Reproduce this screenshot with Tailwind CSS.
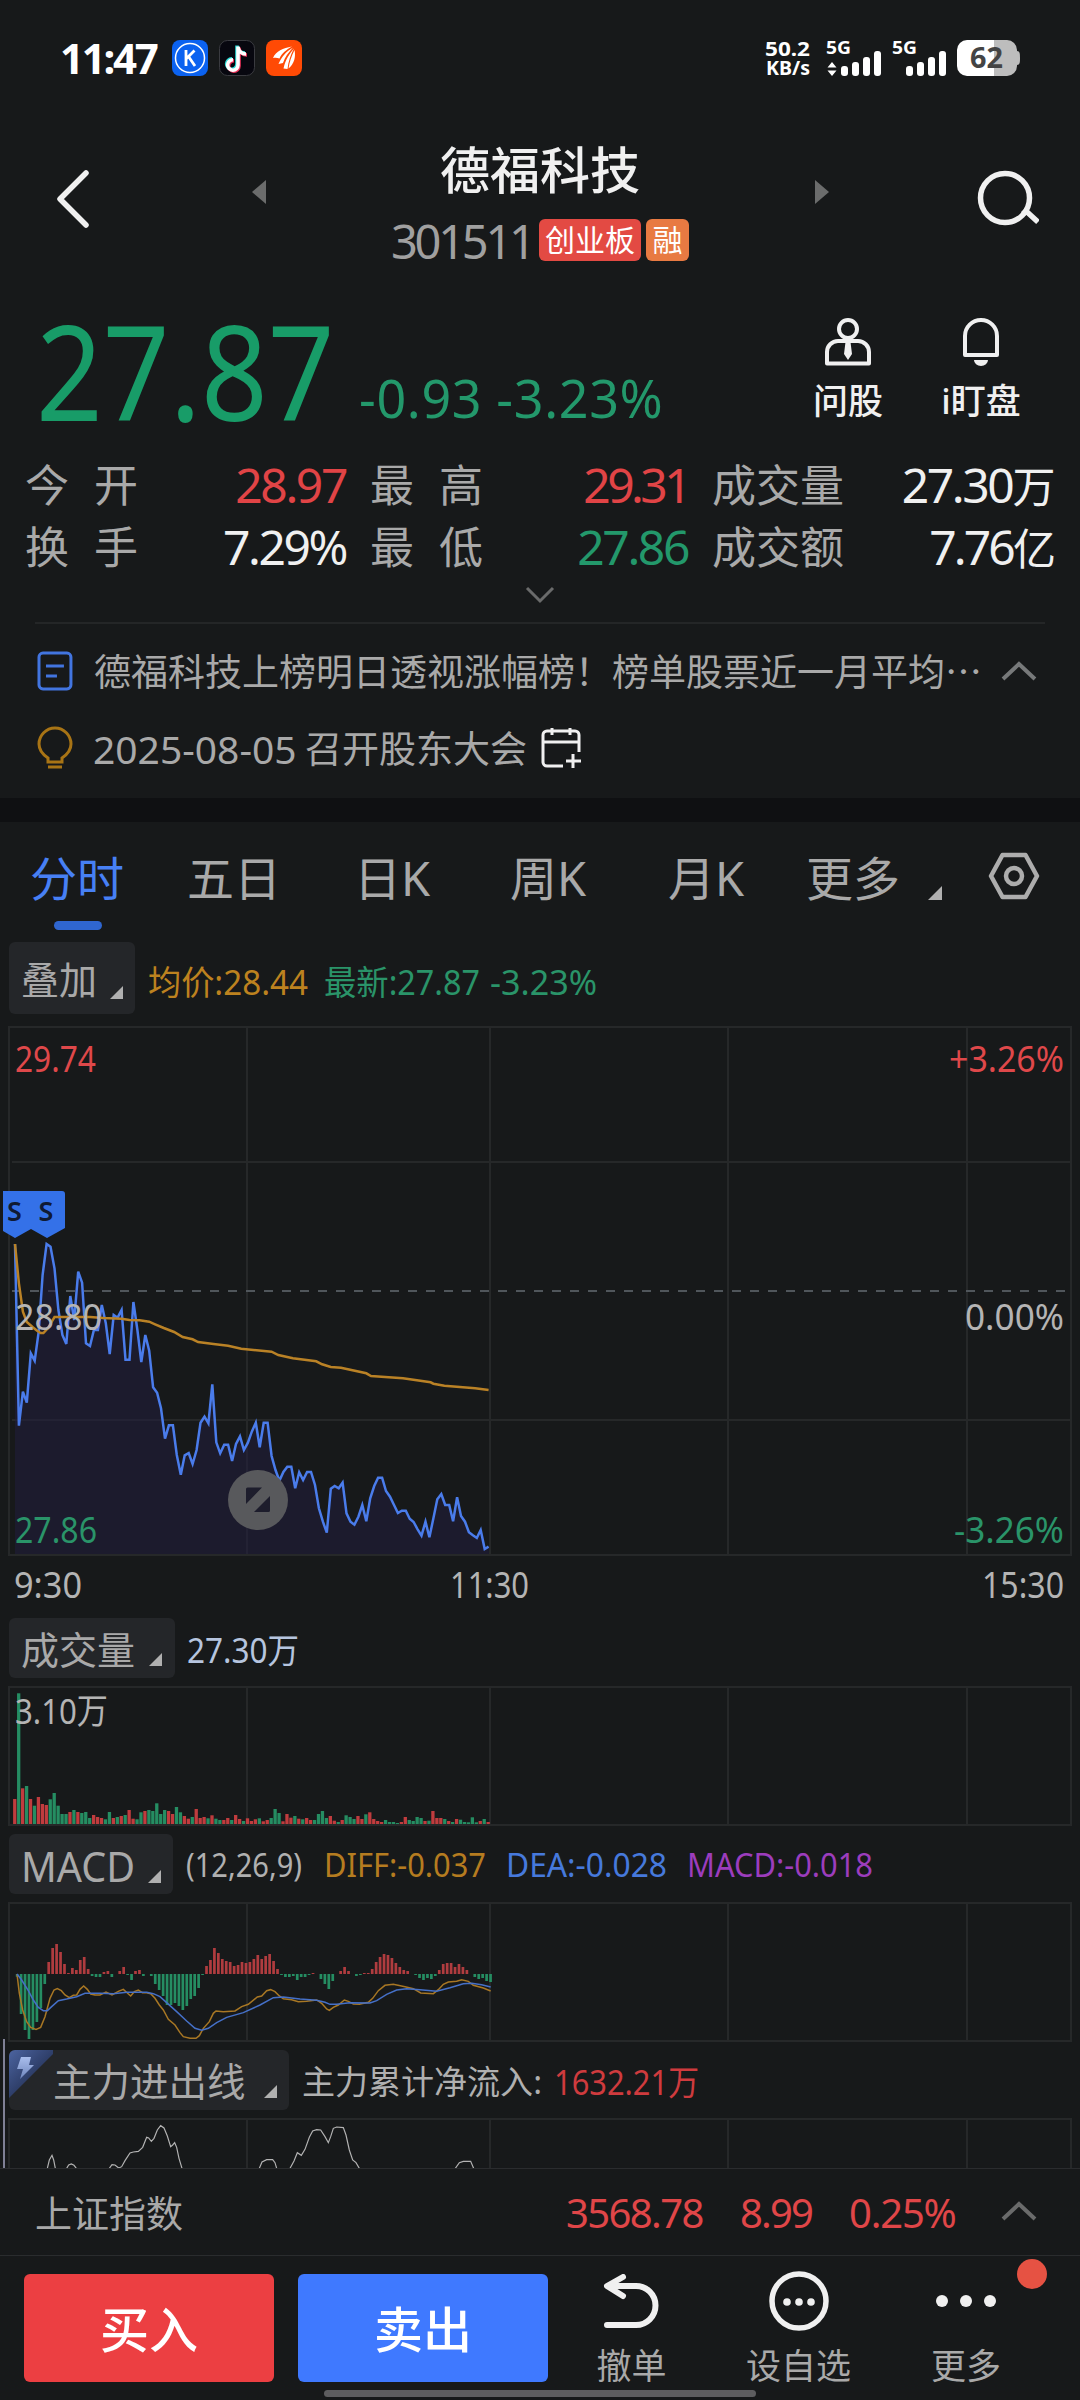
<!DOCTYPE html>
<html lang="zh-CN">
<head>
    <meta charset="UTF-8">
    <meta name="viewport" content="width=device-width, initial-scale=1.0">
    <title>德福科技 301511</title>
    <script src="https://cdn.jsdelivr.net/npm/@tailwindcss/browser@4"></script>
</head>
<body class="bg-[#17191a] font-['Noto_Sans','Noto_Sans_CJK_SC',sans-serif] text-[#a9a9a9]">
<div class="w-[1080px] h-[2400px] overflow-hidden flex flex-col leading-none whitespace-nowrap">

  <!-- Status bar -->
  <div class="h-[116px] shrink-0 flex items-center pl-[60px] pr-[61px] text-white">
    <span class="w-[112px] text-[42px] font-bold tracking-[-0.055em]">11:47</span>
    <div class="flex gap-[11px]">
      <svg class="w-9 h-9" viewBox="0 0 36 36">
        <rect width="36" height="36" rx="8" fill="#0b62f0"/>
        <circle cx="18" cy="18" r="14.500" fill="none" stroke="#fff" stroke-width="1.5"/>
        <path d="M14 10v16M22.500 10.500l-8 8M16.500 16.500l6.500 9.500" fill="none" stroke="#fff" stroke-width="2.800"/>
      </svg>
      <svg class="w-9 h-9" viewBox="0 0 36 36">
        <rect x=".5" y=".5" width="35" height="35" rx="8" fill="#07070f" stroke="#3a3b40"/>
        <g fill="none" stroke-width="3.6">
          <path d="M18 5.500v18.500a5.200 5.200 0 1 1-5-5.200M18 6c.5 4.500 4 7 8 7" stroke="#2bd9d5"/>
          <path d="M20 7.500v18.500a5.200 5.200 0 1 1-5-5.200M20 8c.5 4.500 4 7 8 7" stroke="#f0325a"/>
          <path d="M19 6.500v18.500a5.200 5.200 0 1 1-5-5.200M19 7c.5 4.500 4 7 8 7" stroke="#fff"/>
        </g>
      </svg>
      <svg class="w-9 h-9" viewBox="0 0 36 36">
        <rect width="36" height="36" rx="8" fill="#ff4a05"/>
        <path d="M26 6.500C17 8 10 11 7 18c2-.5 4-.5 6.500.5C16 13 20 10 26 6.500z" fill="#fff"/>
        <path d="M27 7.500C20 12 16 16 12.500 24l4.500-1C19 17 22 13 27 7.500z" fill="#fff"/>
        <path d="M28 8.500c-4.500 5-8.500 11-10.500 20l4 .5c1-8 3-14 6.500-20.500z" fill="#fff"/>
        <path d="M28.500 10c-3 6-5 11.500-6 18.500C28 24 30 17 28.500 10z" fill="#fff"/>
      </svg>
    </div>
    <div class="ml-auto flex items-center">
      <svg class="w-[60px] h-10" viewBox="765 38 60 40" fill="#fff" font-weight="700" font-size="20">
        <text x="766" y="56" textLength="45" lengthAdjust="spacingAndGlyphs">50.2</text>
        <text x="767" y="75" font-size="19" textLength="44" lengthAdjust="spacingAndGlyphs">KB/s</text>
      </svg>
      <svg class="w-[132px] h-10" viewBox="-1 0 132 40" fill="#fff" overflow="visible">
        <text x="1" y="16" font-size="18" font-weight="700" textLength="25" lengthAdjust="spacingAndGlyphs">5G</text>
        <path d="M7 24l4.500 5.500h-9zM7 38l4.500-5.500h-9z"/>
        <rect x="16" y="28" width="7" height="10" rx="3"/><rect x="27" y="24" width="7" height="14" rx="3"/><rect x="38" y="19" width="7" height="19" rx="3"/><rect x="49" y="13" width="7" height="25" rx="3"/>
        <text x="67" y="16" font-size="18" font-weight="700" textLength="25" lengthAdjust="spacingAndGlyphs">5G</text>
        <rect x="81" y="28" width="7" height="10" rx="3"/><rect x="92" y="24" width="7" height="14" rx="3"/><rect x="103" y="19" width="7" height="19" rx="3"/><rect x="114" y="13" width="7" height="25" rx="3"/>
      </svg>
      <svg class="w-[63px] h-9" viewBox="-1 0 63 36" overflow="visible">
        <path d="M10 0h27v36H10A10 10 0 0 1 0 26V10A10 10 0 0 1 10 0z" fill="#fff"/>
        <path d="M37 0h13a10 10 0 0 1 10 10v1c3 0 3 3 3 7s0 7-3 7v1a10 10 0 0 1-10 10H37z" fill="#bdbdbd"/>
        <text x="13" y="28" font-size="28" font-weight="700" fill="#444" textLength="33" lengthAdjust="spacingAndGlyphs">62</text>
      </svg>
    </div>
  </div>

  <!-- Stock title -->
  <header class="h-[174px] shrink-0 flex items-start pl-[55px] text-[#f0f0f0]">
    <svg class="w-9 h-[62px] mt-[52px]" viewBox="0 0 36 62" fill="none" stroke="currentColor" stroke-width="5.500" stroke-linecap="round" stroke-linejoin="round"><path d="M31 5L5 31l26 26"/></svg>
    <svg class="w-[14px] h-6 mt-[64px] ml-[161px]" viewBox="0 0 14 24"><path d="M14 0v24L0 12z" fill="#6b6c6c"/></svg>
    <div class="w-[300px] mt-[27px] ml-[124px] flex flex-col items-center">
      <h1 class="text-[50px] leading-[54px] font-medium">德福科技</h1>
      <div class="flex items-center mt-[21px] h-[44px]">
        <span class="w-[148px] text-[47px] leading-[46px] tracking-[-0.07em] pt-[2px] text-[#a0a0a0]">301511</span>
        <span class="w-[102px] h-[42px] rounded-md bg-[#e34a43] text-white text-[30px] leading-[41px] text-center">创业板</span>
        <span class="w-[43px] h-[42px] ml-[5px] rounded-md bg-[#e87a42] text-white text-[30px] leading-[41px] text-center">融</span>
      </div>
    </div>
    <svg class="w-[14px] h-6 mt-[64px] ml-[125px]" viewBox="0 0 14 24"><path d="M0 0v24l14-12z" fill="#6b6c6c"/></svg>
    <svg class="w-[62px] h-[58px] mt-[54px] ml-[148px]" viewBox="0 0 62 58" fill="none" stroke="currentColor" stroke-width="5.500"><circle cx="28" cy="28" r="24.500"/><path d="M46 44l3-3 12 11"/></svg>
  </header>

  <!-- Price -->
  <section class="h-[160px] shrink-0 flex items-start text-[#189c68]">
    <div class="w-[324px] shrink-0 pl-[36px]">
      <div class="origin-left scale-x-[0.885] text-[132px] leading-[160px]">27.87</div>
    </div>
    <div class="w-[475px] shrink-0 pl-[35px] pt-[80px] text-[52px] leading-[56px] tracking-[0.013em] text-[#23986b]"><span>-0.93</span><span class="ml-[14px]">-3.23%</span></div>
    <div class="w-[98px] flex flex-col items-center text-[#f0f0f0] pt-[27px]">
      <svg class="w-12 h-[50px]" viewBox="0 0 48 50" fill="none" stroke="currentColor" stroke-width="4"><circle cx="24" cy="12" r="9"/><path d="M3 46.500V35a11 11 0 0 1 11-11h20a11 11 0 0 1 11 11v11.500z" stroke-linejoin="round"/><path d="M21.500 25h5l1.500 12-4 6-4-6z" fill="currentColor" stroke="none"/></svg>
      <span class="mt-[15px] text-[35px] leading-[38px] font-medium">问股</span>
    </div>
    <div class="w-[168px] flex flex-col items-center text-[#f0f0f0] pt-[27px]">
      <svg class="w-12 h-[50px]" viewBox="0 0 48 50" fill="none" stroke="currentColor" stroke-width="4"><path d="M8 38V19a16 16 0 0 1 32 0v19z" stroke-linejoin="round"/><path d="M17 43h14a7 6 0 0 1-14 0z" fill="currentColor" stroke="none"/></svg>
      <span class="mt-[15px] text-[35px] leading-[38px] font-medium">i盯盘</span>
    </div>
  </section>

  <!-- Quote figures -->
  <section class="h-[127px] shrink-0 pl-[25px] pt-[4px] grid grid-cols-[321px_318px_341px] grid-rows-[62px_61px] gap-x-[24px] items-center text-[44px]">
    <div class="flex justify-between items-center"><span>今<i class="inline-block w-[25px]"></i>开</span><span class="text-[48px] tracking-[-0.05em] text-[#e14446]">28.97</span></div>
    <div class="flex justify-between items-center"><span>最<i class="inline-block w-[25px]"></i>高</span><span class="text-[48px] tracking-[-0.075em] text-[#e14446]">29.31</span></div>
    <div class="flex justify-between items-center"><span>成交量</span><span class="text-[48px] tracking-[-0.05em] text-[#f0f0f0]">27.30<span class="text-[43px]">万</span></span></div>
    <div class="flex justify-between items-center"><span>换<i class="inline-block w-[25px]"></i>手</span><span class="text-[48px] tracking-[-0.05em] text-[#f0f0f0]">7.29%</span></div>
    <div class="flex justify-between items-center"><span>最<i class="inline-block w-[25px]"></i>低</span><span class="text-[48px] tracking-[-0.05em] text-[#23986b]">27.86</span></div>
    <div class="flex justify-between items-center"><span>成交额</span><span class="text-[48px] tracking-[-0.06em] text-[#f0f0f0]">7.76<span class="text-[43px]">亿</span></span></div>
  </section>
  <div class="h-[47px] shrink-0 mx-[35px] border-b-2 border-[#242627] flex justify-center pt-[9px]">
    <svg class="w-[30px] h-[18px]" viewBox="0 0 30 18" fill="none" stroke="#6a6b6b" stroke-width="3"><path d="M2 2l13 13L28 2"/></svg>
  </div>

  <!-- Notices -->
  <section class="h-[174px] shrink-0 pl-[37px] pr-[43px] pt-[18px]">
    <div class="h-[58px] flex items-center">
      <svg class="w-9 h-10" viewBox="0 0 36 40" fill="none" stroke="#4275e0" stroke-width="3"><rect x="2" y="2" width="32" height="36" rx="4"/><path d="M9 15h18M9 25h11"/></svg>
      <span class="ml-[21px] w-[909px] text-[37px]">德福科技上榜明日透视涨幅榜！榜单股票近一月平均<span class="font-['Noto_Sans_CJK_SC']">…</span></span>
      <svg class="w-9 h-5" viewBox="0 0 36 20" fill="none" stroke="#77797a" stroke-width="4"><path d="M2 18L18 3l16 15"/></svg>
    </div>
    <div class="h-[58px] mt-[19px] flex items-center">
      <svg class="w-9 h-11" viewBox="0 0 36 44" fill="none" stroke="#a87415" stroke-width="3"><path d="M11 36v-4C5 28 2 24 2 18a16 16 0 0 1 32 0c0 6-3 10-9 14v4z"/><path d="M11 41h14"/></svg>
      <span class="ml-[20px] w-[212px] text-[39px]">2025-08-05</span>
      <span class="text-[37px] w-[235px]">召开股东大会</span>
      <svg class="w-[42px] h-[42px]" viewBox="0 0 42 42" fill="none" stroke="#f0f0f0" stroke-width="3"><path d="M23 39H7a4 4 0 0 1-4-4V8a4 4 0 0 1 4-4h28a4 4 0 0 1 4 4v17M3 15h36M12 1v7M30 1v7M33 27v14M26 34h15"/></svg>
    </div>
  </section>
  <div class="h-6 shrink-0 bg-[#0f1012]"></div>

  <!-- Period tabs -->
  <nav class="h-[120px] shrink-0 pt-[32px] pl-[30px] flex items-start text-[47px] leading-[48px]">
    <div class="w-[157px] text-[#4780f5]">分时<div class="w-12 h-[9px] mt-[19px] ml-[24px] rounded-full bg-[#2f66d0]"></div></div>
    <span class="w-[167px]">五日</span>
    <span class="w-[156px]">日K</span>
    <span class="w-[158px]">周K</span>
    <span class="w-[138px]">月K</span>
    <span class="w-[122px]">更多</span>
    <svg class="w-[14px] h-[14px] mt-[32px]" viewBox="0 0 14 14"><path d="M14 0v14H0z" fill="#b0b0b0"/></svg>
    <svg class="w-[52px] h-12 ml-[46px] -mt-[2px]" viewBox="0 0 52 48" fill="none" stroke="#adadad" stroke-width="4.500"><path d="M14.500 3h23L49 24 37.500 45h-23L3 24z" stroke-linejoin="round"/><circle cx="26" cy="24" r="8"/></svg>
  </nav>

  <!-- Intraday price -->
  <div class="h-[84px] shrink-0 pl-[9px] flex items-start text-[34px]">
    <div class="w-[126px] h-[72px] shrink-0 rounded-md bg-[#242629] flex items-center pl-[12px] pt-[1px] text-[38px]">叠加
      <svg class="w-[13px] h-[13px] ml-[13px] mt-[28px]" viewBox="0 0 14 14"><path d="M14 0v14H0z" fill="#b0b0b0"/></svg>
    </div>
    <svg class="w-[480px] h-[84px]" viewBox="135 942 480 84" font-size="34" fill="#2a9469">
      <text x="148" y="995" fill="#bd821f" textLength="160" lengthAdjust="spacingAndGlyphs">均价:28.44</text>
      <text x="324" y="995" textLength="156" lengthAdjust="spacingAndGlyphs">最新:27.87</text>
      <text x="490" y="995" textLength="107" lengthAdjust="spacingAndGlyphs">-3.23%</text>
    </svg>
  </div>
  <svg class="w-[1080px] h-[592px] shrink-0" viewBox="0 1026 1080 592" font-size="36">
    <g stroke="#262829" stroke-width="2" fill="none">
      <path d="M9 1027H1071V1555H9zM247 1027V1555M490 1027V1555M728 1027V1555M967 1027V1555M12 1162H1071M12 1420H1071"/>
      <path d="M12 1291H1071" stroke="#50565b" stroke-dasharray="9 9"/>
    </g>
    <polygon id="price-area" fill="#211e3e" fill-opacity=".55"/>
    <polyline id="price-line" fill="none" stroke="#4a7ceb" stroke-width="2.500"/>
    <polyline id="avg-line" fill="none" stroke="#ba8226" stroke-width="2.500"/>
    <path d="M3 1191H62a3 3 0 0 1 3 3V1228L47 1238 31 1229 15 1238 3 1231z" fill="#3471e8"/>
    <g font-size="27" font-weight="600" fill="#0f1a33"><text x="7" y="1221">S</text><text x="38.500" y="1221">S</text></g>
    <circle cx="258" cy="1500" r="30" fill="#58595c"/>
    <path d="M246 1489a1.500 1.500 0 0 1 1.500-1.500H262L246 1504zM270 1496V1510.500a1.500 1.500 0 0 1-1.500 1.500H254z" fill="#1d1d2c"/>
    <g fill="#b4b4b4">
      <text x="15" y="1072" fill="#df484a" textLength="81" lengthAdjust="spacingAndGlyphs">29.74</text>
      <text x="949" y="1072" fill="#df484a" textLength="115" lengthAdjust="spacingAndGlyphs">+3.26%</text>
      <text x="15" y="1330" textLength="87" lengthAdjust="spacingAndGlyphs">28.80</text>
      <text x="965" y="1330" textLength="99" lengthAdjust="spacingAndGlyphs">0.00%</text>
      <text x="15" y="1543" fill="#2a9469" textLength="82" lengthAdjust="spacingAndGlyphs">27.86</text>
      <text x="954" y="1543" fill="#2a9469" textLength="110" lengthAdjust="spacingAndGlyphs">-3.26%</text>
      <text x="14" y="1598" textLength="68" lengthAdjust="spacingAndGlyphs">9:30</text>
      <text x="450" y="1598" textLength="79" lengthAdjust="spacingAndGlyphs">11:30</text>
      <text x="982" y="1598" textLength="82" lengthAdjust="spacingAndGlyphs">15:30</text>
    </g>
  </svg>

  <!-- Volume -->
  <div class="h-[68px] shrink-0 pl-[9px] flex items-start">
    <div class="w-[166px] h-[60px] shrink-0 rounded-md bg-[#242629] flex items-center pl-[12px] pt-[2px] text-[38px]">成交量
      <svg class="w-[13px] h-[13px] ml-[14px] mt-[21px]" viewBox="0 0 14 14"><path d="M14 0v14H0z" fill="#b0b0b0"/></svg>
    </div>
    <svg class="w-[140px] h-[60px]" viewBox="175 1618 140 60" font-size="34"><text x="187" y="1663" fill="#b6c5df" textLength="112" lengthAdjust="spacingAndGlyphs">27.30万</text></svg>
  </div>
  <svg class="w-[1080px] h-[148px] shrink-0" viewBox="0 1686 1080 148">
    <path d="M9 1687H1071V1825H9zM247 1687V1825M490 1687V1825M728 1687V1825M967 1687V1825" stroke="#262829" stroke-width="2" fill="none"/>
    <g id="volume-bars"></g>
    <text x="15" y="1724" font-size="35" fill="#b4b4b4" textLength="93" lengthAdjust="spacingAndGlyphs">3.10万</text>
  </svg>

  <!-- MACD -->
  <div class="h-[68px] shrink-0 pl-[9px] flex items-start">
    <div class="w-[164px] h-[60px] shrink-0 rounded-md bg-[#242629] flex items-center pl-[12px]">
      <svg class="w-[140px] h-[60px]" viewBox="21 1834 140 60"><text x="21" y="1882" font-size="41" fill="#a9a9a9" textLength="114" lengthAdjust="spacingAndGlyphs">MACD</text><path d="M161 1870v13h-13z" fill="#b0b0b0"/></svg>
    </div>
    <svg class="w-[720px] h-[60px]" viewBox="173 1834 720 60" font-size="32">
      <text x="186" y="1877" fill="#b0b0b0" textLength="116" lengthAdjust="spacingAndGlyphs">(12,26,9)</text>
      <text x="324" y="1877" fill="#b57c20" textLength="162" lengthAdjust="spacingAndGlyphs">DIFF:-0.037</text>
      <text x="506" y="1877" fill="#4679dc" textLength="161" lengthAdjust="spacingAndGlyphs">DEA:-0.028</text>
      <text x="687" y="1877" fill="#9c3dbd" textLength="186" lengthAdjust="spacingAndGlyphs">MACD:-0.018</text>
    </svg>
  </div>
  <svg class="w-[1080px] h-[137px] shrink-0" viewBox="0 1902 1080 137" overflow="visible">
    <path d="M9 1903H1071V2041H9zM247 1903V2041M490 1903V2041M728 1903V2041M967 1903V2041" stroke="#262829" stroke-width="2" fill="none"/>
    <g id="macd-bars"></g>
    <g transform="translate(0 1890) scale(.33333)" fill="none" stroke-width="4.500">
      <polyline stroke="#a87724" points="51,252 58,310 68,360 80,395 92,412 108,418 122,412 135,380 150,325 162,300 172,296 184,302 195,315 208,323 220,316 230,315 240,298 251,288 262,298 272,312 285,315 300,315 318,306 336,315 355,304 370,298 382,309 392,318 403,305 415,300 427,308 440,308 452,311 465,325 478,345 490,360 505,388 525,405 540,428 550,440 570,445 588,445 598,437 610,415 628,395 640,370 648,363 670,365 705,363 725,350 745,343 772,321 785,318 800,302 812,299 825,305 838,318 850,326 875,329 895,335 920,334 950,330 965,340 980,357 988,361 1000,352 1015,345 1033,330 1045,334 1060,342 1078,343 1105,337 1118,325 1135,302 1155,286 1180,283 1215,290 1240,296 1262,309 1300,311 1315,299 1330,283 1345,276 1370,274 1385,269 1405,274 1420,286 1450,294 1472,303"/>
      <polyline stroke="#4570c8" points="51,252 65,270 85,302 100,330 115,352 130,362 142,362 155,350 175,332 200,327 230,320 255,310 300,310 340,311 380,307 440,307 460,311 480,320 500,338 530,365 560,393 585,415 605,421 625,415 650,398 680,382 730,368 780,345 820,323 850,321 900,327 950,331 975,337 990,343 1010,343 1050,338 1110,339 1130,332 1160,313 1190,300 1220,296 1260,299 1310,304 1350,293 1390,281 1415,280 1445,284 1472,291"/>
    </g>
  </svg>

  <!-- Main capital flow -->
  <div class="h-[129px] shrink-0 ml-[3px] border-l-2 border-[#7f8095]">
    <div class="h-[79px] pt-[11px] pl-[4px] flex items-start">
      <div class="w-[280px] h-[60px] shrink-0 rounded-md bg-[#242629] overflow-hidden flex items-center">
        <svg class="w-[44px] h-[60px]" viewBox="0 0 44 60">
          <defs>
            <linearGradient id="corner" x1="0" y1="0" x2="1" y2="1"><stop offset="0" stop-color="#4c64a0"/><stop offset=".55" stop-color="#2b3a63"/></linearGradient>
            <linearGradient id="bolt" x1="0" y1="0" x2="0" y2="1"><stop offset="0" stop-color="#a9bdec"/><stop offset="1" stop-color="#6f86bd"/></linearGradient>
          </defs>
          <path d="M0 0h48L0 48z" fill="url(#corner)"/><path d="M12 7h10l-2 8h5L11 29l3-10H8z" fill="url(#bolt)"/>
        </svg>
        <span class="w-[211px] pt-[2px] text-[38.500px]">主力进出线</span>
        <svg class="w-[13px] h-[13px] mt-[23px]" viewBox="0 0 14 14"><path d="M14 0v14H0z" fill="#b0b0b0"/></svg>
      </div>
      <svg class="w-[430px] h-[60px]" viewBox="289 2050 430 60" font-size="33">
        <text x="302" y="2094" fill="#b0b0b0" textLength="240" lengthAdjust="spacingAndGlyphs">主力累计净流入:</text>
        <text x="554" y="2095" font-size="34" fill="#cf3b3e" textLength="145" lengthAdjust="spacingAndGlyphs">1632.21万</text>
      </svg>
    </div>
    <svg class="w-[1075px] h-[50px]" viewBox="5 2118 1075 50">
      <path d="M9 2200V2119H1071V2200M247 2119V2200M490 2119V2200M728 2119V2200M967 2119V2200" stroke="#262829" stroke-width="2" fill="none"/>
      <g transform="translate(0 2030) scale(.33333)" fill="none" stroke="#b4b4b4" stroke-width="3.500">
        <polyline points="142,415 148,390 156,376 161,390 166,415"/>
        <polyline points="200,415 206,405 214,402 222,406 229,415"/>
        <polyline points="328,415 336,404 345,405 356,414 365,410 375,392 390,369 400,366 415,364 428,352 440,322 446,324 454,334 462,325 472,300 482,287 492,294 502,318 512,350 518,345 524,338 530,352 537,385 546,415"/>
        <polyline points="778,415 786,396 800,389 818,389 825,398 830,415"/>
        <polyline points="870,415 882,393 892,368 904,376 915,358 928,322 938,303 950,299 962,300 975,320 985,338 992,320 1000,295 1010,291 1030,293 1038,315 1048,360 1058,390 1068,398 1078,415"/>
        <polyline points="1366,415 1378,398 1390,394 1412,394 1421,415"/>
      </g>
    </svg>
  </div>

  <!-- Index strip -->
  <div class="h-[87px] shrink-0 border-t border-[#2a2c2e] pl-[35px] pr-[43px] pt-[2px] flex items-center text-[37px]">
    <span class="w-[531px]">上证指数</span>
    <span class="w-[174px] text-[40px] tracking-[-0.04em] text-[#e04648]">3568.78</span>
    <span class="w-[109px] text-[40px] tracking-[-0.045em] text-[#e04648]">8.99</span>
    <span class="text-[40px] tracking-[-0.03em] text-[#e04648]">0.25%</span>
    <svg class="w-9 h-5 ml-auto -mt-[5px]" viewBox="0 0 36 20" fill="none" stroke="#6a6b6b" stroke-width="4"><path d="M2 18L18 3l16 15"/></svg>
  </div>

  <!-- Trade bar -->
  <footer class="h-[145px] shrink-0 border-t border-[#2a2c2e] relative flex items-start pt-[18px] pl-6 text-[35px] leading-[38px]">
    <button class="w-[250px] h-[108px] rounded-md bg-[#ec3f42] text-white text-[49px] font-medium pt-[2px]">买入</button>
    <button class="w-[250px] h-[108px] ml-6 rounded-md bg-[#3f79ff] text-white text-[49px] font-medium pt-[2px]">卖出</button>
    <div class="w-[167px] flex flex-col items-center">
      <svg class="w-[60px] h-[58px]" viewBox="0 0 60 58" fill="none" stroke="#f0f0f0" stroke-width="6" stroke-linecap="round" stroke-linejoin="round"><path d="M5 51h29a19.500 19.500 0 0 0 0-39H6M21 3L5 12l16 10"/></svg>
      <span class="mt-[15px]">撤单</span>
    </div>
    <div class="w-[167px] flex flex-col items-center">
      <svg class="w-[62px] h-[62px] -mt-[4px]" viewBox="0 0 62 62" fill="#f0f0f0"><circle cx="31" cy="31" r="27" fill="none" stroke="#f0f0f0" stroke-width="5.500"/><circle cx="19" cy="32" r="3.800"/><circle cx="31" cy="32" r="3.800"/><circle cx="43" cy="32" r="3.800"/></svg>
      <span class="mt-[15px]">设自选</span>
    </div>
    <div class="w-[168px] flex flex-col items-center">
      <svg class="w-[62px] h-[58px]" viewBox="0 0 62 58" fill="#f0f0f0"><circle cx="7" cy="27" r="6"/><circle cx="31" cy="27" r="6"/><circle cx="55" cy="27" r="6"/></svg>
      <span class="mt-[15px]">更多</span>
    </div>
    <div class="absolute left-[1017px] top-[3px] w-[30px] h-[30px] rounded-full bg-[#e65243]"></div>
    <div class="absolute left-[324px] top-[134px] w-[432px] h-[7px] rounded-full bg-[#5d5d5f]"></div>
  </footer>
</div>

<script>
  // One value per minute, 9:30 to 11:30, as depth below the top of the range
  const price = [252,797,695,728,580,602,515,345,252,260,325,450,525,552,408,480,335,368,550,558,510,510,435,490,582,465,473,450,599,599,426,510,606,525,572,682,698,745,836,796,796,885,944,886,879,912,870,788,770,790,673,847,880,854,854,903,852,829,870,848,815,788,862,788,788,888,930,962,936,920,920,985,937,960,936,936,975,1045,1085,1118,986,978,985,968,1060,1085,1094,1070,1035,1084,1015,978,953,953,993,1010,1034,1059,1052,1052,1076,1086,1108,1127,1085,1132,1075,1018,1002,1035,1035,1084,1012,1068,1085,1117,1126,1134,1110,1167,1160];
  const pricePoints = price.map((v, i) => (15 + i * 3.947).toFixed(1) + ',' + (1160 + v / 3).toFixed(1));
  document.getElementById('price-line').setAttribute('points', pricePoints.join(' '));
  document.getElementById('price-area').setAttribute('points', '15,1554 ' + pricePoints.join(' ') + ' 489,1554');

  const avg = [[0,252],[1,370],[2,455],[3,486],[4.5,502],[5.6,512],[6.5,519],[7.2,519],[8.3,505],[10,471],[14,471],[19,471],[22.4,474],[27,476],[29,480],[31.6,481],[34,485],[35.5,493],[37.7,504],[40.3,516],[42.5,531],[45,538],[46.4,546],[50.3,552],[54,557],[57.3,566],[65,575],[66.7,585],[70.4,595],[76.3,604],[77.8,613],[80,621],[82.6,623],[89,640],[90.2,648],[98.3,655],[105.3,667],[106,671],[108.8,677],[116.6,685],[120,690]];
  document.getElementById('avg-line').setAttribute('points', avg.map(([m, v]) => (15 + m * 3.947).toFixed(1) + ',' + (1160 + v / 3).toFixed(1)).join(' '));

  // Negative volume = falling minute
  const volume = [75,-392,107,-114,75,-55,81,60,57,-74,-93,-55,-30,-30,36,-42,36,-33,-36,-18,27,21,18,-14,-36,18,-21,24,-27,42,16,-14,-35,39,-42,-39,-62,-30,-42,39,30,-51,-35,24,16,-21,45,18,21,-17,26,-16,-12,12,18,-12,27,15,-9,17,9,14,-17,8,12,-18,-45,-33,8,30,19,-24,16,-14,18,12,-12,-30,-39,-18,24,10,-6,12,-26,-21,-15,24,15,-29,35,15,9,6,-12,-6,-6,-3,6,21,-12,-9,-21,-18,9,-10,39,18,18,-15,9,-6,15,-13,-6,-5,-20,-5,9,-15,6];
  document.getElementById('volume-bars').innerHTML = volume.map((v, i) => {
    const h = Math.abs(v) / 3;
    return `<rect x="${(13.1 + i * 3.945).toFixed(2)}" y="${(1824 - h).toFixed(1)}" width="3.3" height="${h.toFixed(1)}" fill="${v > 0 ? '#c03c3e' : '#258d62'}"/>`;
  }).join('');

  const macd = [-8,-120,-168,-195,-168,-144,-102,-30,36,78,90,66,30,3,18,12,42,51,15,-6,-9,-9,6,9,-9,0,9,21,-3,-18,9,12,-6,0,-6,-30,-48,-66,-93,-93,-87,-96,-108,-96,-75,-66,-42,-3,24,42,78,63,45,39,36,24,27,36,33,36,45,57,45,54,60,39,15,-3,-9,-9,-6,-18,-9,-9,-3,3,0,-15,-30,-45,-21,0,9,21,9,0,-6,-3,3,3,15,36,51,60,57,48,33,21,12,9,0,-3,-12,-18,-12,-15,-6,12,30,33,33,21,30,21,12,0,-9,-15,-12,-21,-24];
  document.getElementById('macd-bars').innerHTML = macd.map((v, i) => {
    const h = Math.abs(v) / 3;
    return `<rect x="${(15.8 + i * 3.945).toFixed(2)}" y="${(v > 0 ? 1974 - h : 1974).toFixed(1)}" width="2.7" height="${h.toFixed(1)}" fill="${v > 0 ? '#b03c3f' : '#258d62'}"/>`;
  }).join('');
</script>
</body>
</html>
